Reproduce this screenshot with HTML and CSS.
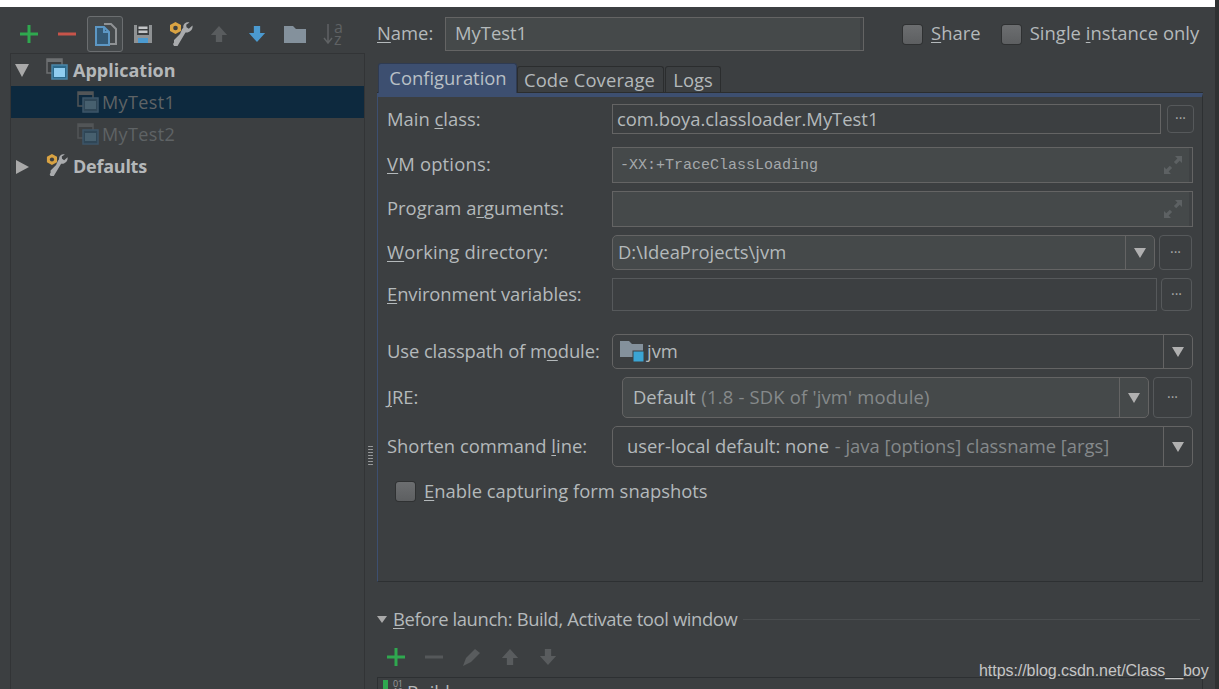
FILE: index.html
```html
<!DOCTYPE html>
<html lang="en">
<head>
<meta charset="utf-8">
<title>Run/Debug Configurations</title>
<link rel="stylesheet" href="styles.css">
</head>
<body>
<svg class="defs" width="0" height="0" aria-hidden="true">
  <defs>
    <symbol id="i-plus" viewBox="0 0 20 20"><path d="M10 1v18M1 10h18" stroke="#2fa84f" stroke-width="3" fill="none"/></symbol>
    <symbol id="i-up" viewBox="0 0 20 20"><path d="M10 1L19 11H13.500V19H6.500V11H1Z" fill="currentColor"/></symbol>
    <symbol id="i-down" viewBox="0 0 20 20"><path d="M10 19L19 9H13.500V1H6.500V9H1Z" fill="currentColor"/></symbol>
    <symbol id="i-wrench" viewBox="0 0 24 24">
      <path d="M6.500 0l5.500 3v6l-5.500 3L1 9V3Z" fill="#d9a343"/><circle cx="6.500" cy="6" r="2.300" fill="#3c3f41"/>
      <path d="M23.500 3.500l-3.700 3.200-2.300-1.500-.3-2.500L20.500.5c-3.300-1-6.700 1.400-6.200 5.200l-1.300 1.600L11 12 5 18v2.500l-1 1.500 1 2h3.500L16.500 10.500c3.500.8 7.800-2.700 7-7Z" fill="#a9abad"/>
    </symbol>
    <symbol id="i-app" viewBox="0 0 22 22">
      <rect x="1" y="1" width="15" height="14" fill="#3c3f41" stroke="#6d7072" stroke-width="1.500"/><rect x="1" y="1" width="15" height="3" fill="#6d7072"/>
      <rect x="6" y="7" width="15" height="14" fill="#2c6a8c" stroke="#4a86a8" stroke-width="1.500"/><rect x="8" y="10" width="11" height="9" fill="#90cdf0"/>
    </symbol>
    <symbol id="i-app-dim" viewBox="0 0 22 22">
      <rect x="1" y="1" width="15" height="14" fill="none" stroke="#525557" stroke-width="1.500"/><rect x="1" y="1" width="15" height="3" fill="#525557"/>
      <rect x="6" y="7" width="15" height="14" fill="#2f4656" stroke="#3c5568" stroke-width="1.500"/><rect x="8" y="10" width="11" height="8" fill="#47606f"/>
    </symbol>
    <symbol id="i-expand" viewBox="0 0 20 20"><path d="M12 1h7v7l-2.300-2.300-3.500 3.500-2.300-2.300 3.500-3.500ZM8 19H1v-7l2.300 2.300 3.500-3.500 2.300 2.300-3.500 3.500Z" fill="#5d6163"/></symbol>
  </defs>
</svg>
<div class="window">
  <div class="frame">
    <div class="topbar"></div>
    <div class="main">
      <aside class="side">
        <div class="toolbar">
          <span class="tool"><svg class="ico20" viewBox="0 0 20 20"><use href="#i-plus"/></svg></span>
          <span class="tool"><svg class="ico20" viewBox="0 0 20 20"><path d="M1 10h18" stroke="#c7544a" stroke-width="3"/></svg></span>
          <span class="tool tool-active"><svg class="ico24" viewBox="0 0 24 24"><path d="M11 2h7l5 5v15h-6" fill="none" stroke="#8f9294" stroke-width="2"/><path d="M3 5h8l5 5v13H3Z" fill="#345a76" stroke="#5c97c4" stroke-width="2"/><path d="M11 5v5h5" fill="none" stroke="#5c97c4" stroke-width="2"/></svg></span>
          <span class="tool"><svg class="ico20" viewBox="0 0 20 20"><path d="M1 1h18v18H1Z" fill="#8f9294"/><rect x="4" y="1" width="12" height="10" fill="#3c3f41"/><rect x="5.500" y="2.500" width="9" height="2.500" fill="#c4c6c8"/><rect x="5.500" y="6.500" width="9" height="2.500" fill="#c4c6c8"/><rect x="5" y="14" width="10" height="5" fill="#4b9ad0"/></svg></span>
          <span class="tool"><svg class="ico24" viewBox="0 0 24 24"><use href="#i-wrench"/></svg></span>
          <span class="tool t-dim"><svg class="ico18" viewBox="0 0 20 20"><use href="#i-up"/></svg></span>
          <span class="tool t-blue"><svg class="ico18" viewBox="0 0 20 20"><use href="#i-down"/></svg></span>
          <span class="tool"><svg class="ico22" viewBox="0 0 22 22"><path d="M0 3h9l3 3h10v14H0Z" fill="#84919c"/></svg></span>
          <span class="tool"><span class="sort"><svg class="sort-arrow" viewBox="0 0 10 20"><path d="M5 0v19M1 14l4 5 4-5" fill="none" stroke="#5f6264" stroke-width="1.500"/></svg><span class="sort-letters"><span class="sort-letter">a</span><span class="sort-letter">z</span></span></span></span>
        </div>
        <div class="tree">
          <div class="tree-row">
            <span class="twist twist-open"></span>
            <svg class="tree-ico ico-top" viewBox="0 0 22 22"><use href="#i-app"/></svg>
            <span class="tree-bold">Application</span>
          </div>
          <div class="tree-row tree-child tree-selected">
            <svg class="tree-ico" viewBox="0 0 22 22"><use href="#i-app-dim"/></svg>
            <span class="tree-dim">MyTest1</span>
          </div>
          <div class="tree-row tree-child">
            <svg class="tree-ico" viewBox="0 0 22 22"><use href="#i-app-dim"/></svg>
            <span class="tree-dim">MyTest2</span>
          </div>
          <div class="tree-row">
            <span class="twist twist-closed"></span>
            <svg class="tree-ico ico-top" viewBox="0 0 24 24"><use href="#i-wrench"/></svg>
            <span class="tree-bold tree-def">Defaults</span>
          </div>
        </div>
      </aside>
      <section class="content">
        <div class="grip"></div>
        <div class="name-row">
          <label class="name-label"><u>N</u>ame:</label>
          <div class="field name-field">MyTest1</div>
          <span class="check share-check"></span><span class="check-text"><u>S</u>hare</span>
          <span class="check single-check"></span><span class="check-text">Single <u>i</u>nstance only</span>
        </div>
        <div class="tabs">
          <span class="tab tab-on">Configuration</span>
          <span class="tab tab-code">Code Coverage</span>
          <span class="tab tab-logs">Logs</span>
        </div>
        <div class="panel">
          <div class="row r-main">
            <span class="label">Main <u>c</u>lass:</span>
            <div class="field plain f-main">com.boya.classloader.MyTest1</div>
            <span class="dots d-main">...</span>
          </div>
          <div class="row r-vm">
            <span class="label"><u>V</u>M options:</span>
            <div class="field filled f-wide strip mono">-XX:+TraceClassLoading<svg class="expand" viewBox="0 0 20 20"><use href="#i-expand"/></svg></div>
          </div>
          <div class="row r-prog">
            <span class="label">Program a<u>r</u>guments:</span>
            <div class="field filled f-wide strip"><svg class="expand" viewBox="0 0 20 20"><use href="#i-expand"/></svg></div>
          </div>
          <div class="row r-work">
            <span class="label label-work"><u>W</u>orking directory:</span>
            <div class="combo filled f-work"><span class="combo-text"><span>D:\<span class="bar-i">I</span>deaProjects\jvm</span></span><span class="caret"></span></div>
            <span class="dots d-work">...</span>
          </div>
          <div class="row r-env">
            <span class="label label-env"><u>E</u>nvironment variables:</span>
            <div class="field plain f-env"></div>
            <span class="dots d-env">...</span>
          </div>
          <div class="row r-cp">
            <span class="label label-cp">Use classpath of m<u>o</u>dule:</span>
            <div class="combo f-wide"><span class="combo-text cp-text"><svg class="mod" viewBox="0 0 24 24"><path d="M0 2h9l3 3h11v13H0Z" fill="#84919c"/><rect x="13" y="12" width="11" height="11" fill="#3ba5d4" stroke="#3c3f41"/></svg>jvm</span><span class="caret"></span></div>
          </div>
          <div class="row r-jre">
            <span class="label"><u>J</u>RE:</span>
            <div class="combo filled f-jre"><span class="combo-text"><span>Default <span class="muted muted-jre">(1.8 - SDK of 'jvm' module)</span></span></span><span class="caret"></span></div>
            <span class="dots d-jre">...</span>
          </div>
          <div class="row r-short">
            <span class="label">Shorten command <u>l</u>ine:</span>
            <div class="combo f-wide"><span class="combo-text short-text"><span>user-local default: none <span class="muted muted-short">- java [options] classname [args]</span></span></span><span class="caret"></span></div>
          </div>
          <div class="snap">
            <span class="check"></span><span class="check-text"><u>E</u>nable capturing form snapshots</span>
          </div>
        </div>
        <div class="before">
          <span class="before-arrow"></span>
          <span class="before-text"><u>B</u>efore launch: Build, Activate tool window</span>
          <span class="before-line"></span>
        </div>
        <div class="before-tools">
          <span class="btool"><svg class="ico20" viewBox="0 0 20 20"><use href="#i-plus"/></svg></span>
          <span class="btool"><svg class="ico20" viewBox="0 0 20 20"><path d="M1 10h18" stroke="#55585a" stroke-width="3"/></svg></span>
          <span class="btool"><svg class="ico20" viewBox="0 0 20 20"><path d="M1 19l3-8L13 2l5 4-9 9Z" fill="#595c5e"/></svg></span>
          <span class="btool t-dim"><svg class="ico18" viewBox="0 0 20 20"><use href="#i-up"/></svg></span>
          <span class="btool t-dim"><svg class="ico18" viewBox="0 0 20 20"><use href="#i-down"/></svg></span>
        </div>
        <div class="build-list">
          <span class="build-bars"></span><span class="build-nums">01<br>10</span><span class="build-text">Build</span>
        </div>
      </section>
    </div>
  </div>
  <div class="edge"></div>
  <div class="watermark">https://blog.csdn.net/Class__boy</div>
</div>
</body>
</html>
```
FILE: styles.css
```css
* { box-sizing: border-box; }
html, body { margin: 0; height: 689px; overflow: hidden; background: #3c3f41; }
body { font-family: "Open Sans", "Noto Sans", "Liberation Sans", sans-serif; font-size: 18.4px; color: #b4b9bb; }
u { text-underline-offset: 2px; text-decoration-thickness: 1px; }
.defs { position: absolute; }

.window { display: flex; height: 689px; position: relative; overflow: hidden; }
.frame { width: 1215px; display: flex; flex-direction: column; }
.edge { width: 4px; background: #2f3132; }
.topbar { height: 7px; background: #fff; flex: none; }
.main { display: flex; flex: 1; min-height: 0; }

.side { width: 365px; flex: none; display: flex; flex-direction: column; }
.toolbar { height: 46px; padding: 9px 0 0 10px; display: flex; flex: none; }
.tool { width: 38px; height: 36px; display: flex; align-items: center; justify-content: center; }
.tool-active { width: 36px; margin: 0 1px; border: 1px solid #6b6e70; border-radius: 3px; background: #45494b; }
.t-dim { color: #595c5e; }
.t-blue { color: #4b9ad0; }
.ico18 { width: 18px; height: 18px; }
.ico20 { width: 20px; height: 20px; }
.ico22 { width: 22px; height: 22px; }
.ico24 { width: 24px; height: 24px; }
.sort { display: flex; align-items: center; gap: 1px; }
.sort-arrow { width: 10px; height: 20px; }
.sort-letters { display: flex; flex-direction: column; padding-bottom: 2px; }
.sort-letter { font-size: 16px; height: 12px; line-height: 12px; color: #5f6264; }

.tree { flex: 1; margin-left: 10px; border: 1px solid #323436; border-bottom: 0; }
.tree-row { height: 32px; display: flex; align-items: center; position: relative; padding-left: 35px; }
.tree-child { padding-left: 66px; }
.tree-selected { background: #0d293e; }
.tree-ico { width: 22px; height: 22px; flex: none; margin-right: 5px; }
.tree-child .tree-ico { margin-right: 3px; }
.ico-top { margin-top: -2px; }
.tree-bold { font-weight: 700; font-size: 18px; color: #b4b7b9; }
.tree-def { letter-spacing: -0.25px; }
.tree-dim { color: #5f6365; font-size: 18px; letter-spacing: 0.4px; }
.twist { position: absolute; left: 4px; top: 10px; width: 0; height: 0; }
.twist-open { border-left: 7px solid transparent; border-right: 7px solid transparent; border-top: 13px solid #a9a9a9; }
.twist-closed { left: 5px; border-top: 7px solid transparent; border-bottom: 7px solid transparent; border-left: 13px solid #a9a9a9; }

.content { flex: 1; padding-left: 12px; position: relative; min-width: 0; }
.grip { position: absolute; left: 3px; top: 438px; width: 5px; height: 21px; background-image: radial-gradient(circle, #a0a2a4 0.8px, transparent 1px); background-size: 2.500px 3px; }
.name-row { display: flex; align-items: center; height: 34px; margin-top: 10px; }
.name-label { width: 68px; padding-bottom: 4px; }
.field { border: 1px solid #646464; display: flex; align-items: center; position: relative; }
.name-field { width: 419px; height: 34px; padding: 0 0 4px 9px; background: #45494a; margin-right: 39px; box-shadow: inset -3px 0 0 #3f4244; }
.strip { box-shadow: inset -3px 0 0 #3f4244; }
.check { width: 19px; height: 19px; flex: none; border-radius: 3px; background: linear-gradient(#6c6e70, #5d5f61); box-shadow: 0 0 0 1px #2f3132; margin-right: 9px; }
.single-check { margin-left: 21px; }
.check-text { white-space: nowrap; }
.name-row .check-text { padding-bottom: 4px; letter-spacing: 0.05px; }
.snap .check-text { padding-bottom: 2px; }

.tabs { display: flex; align-items: flex-end; height: 30px; margin-top: 12px; padding-left: 1px; }
.tab { height: 27px; border: 1px solid #2b2d2e; border-bottom: 0; border-radius: 3px 3px 0 0; display: flex; align-items: center; justify-content: center; padding-bottom: 2px; }
.tab-on { height: 30px; width: 139px; background: #3d4f70; color: #b9c0c6; border-color: #2f3b52; padding: 0 0 3px 1px; position: relative; z-index: 1; }
.tab-code { width: 147px; padding-right: 2px; letter-spacing: 0.15px; }
.tab-logs { width: 56px; margin-left: 1px; }

.panel { width: 826px; height: 489px; border: 1px solid #2d3032; border-left-color: #3d4f70; border-top: 4px solid #3d4f70; box-shadow: 0 -1px 0 #2b2d2e; padding: 7px 0 0 9px; }
.row { display: flex; align-items: center; }
.label { width: 225px; flex: none; white-space: nowrap; padding-bottom: 2px; }
.label-work { letter-spacing: 0.2px; }
.label-env { letter-spacing: -0.1px; }
.label-cp { letter-spacing: -0.1px; }
.r-vm .label, .r-prog .label { padding-bottom: 4px; }
.r-vm .label { letter-spacing: 0.2px; }
.plain { height: 100%; padding-left: 4px; }
.f-main { padding-bottom: 2px; }
.filled { background: #45494a; }
.mono { font-family: "Liberation Mono", monospace; font-size: 15px; padding-left: 7px; color: #a4a8aa; }
.f-wide { width: 581px; height: 100%; }
.expand { position: absolute; right: 9px; top: 7px; width: 20px; height: 20px; }
.dots { border: 1px solid #56595b; border-radius: 4px; display: flex; align-items: center; justify-content: center; height: 100%; margin-left: 4px; padding-bottom: 10px; font-size: 14px; color: #a8a8a8; line-height: 1; }
.r-main { height: 30px; }
.f-main { width: 549px; }
.d-main { width: 27px; margin-left: 6px; height: 28px; }
.r-vm { height: 36px; margin-top: 13px; }
.r-vm .field, .r-prog .field { height: 36px; }
.r-prog { height: 36px; margin-top: 8px; }
.r-work { height: 35px; margin-top: 8px; }
.f-work { width: 543px; height: 100%; }
.d-work { width: 33px; }
.r-env { height: 33px; margin-top: 8px; }
.f-env { width: 545px; border-color: #56595b; }
.d-env { width: 31px; }
.combo { border: 1px solid #646464; border-radius: 5px; display: flex; align-items: center; }
.combo-text { flex: 1; padding: 0 0 2px 5px; white-space: nowrap; display: flex; align-items: center; }
.caret { width: 29px; height: 100%; border-left: 1px solid #646464; flex: none; position: relative; }
.caret::after { content: ""; position: absolute; left: 8px; top: 50%; margin-top: -5px; border-left: 6px solid transparent; border-right: 6px solid transparent; border-top: 10px solid #b0b0b0; }
.r-cp { height: 35px; margin-top: 23px; }
.cp-text { padding-left: 7px; gap: 3px; }
.mod { width: 24px; height: 24px; }
.r-jre { height: 41px; margin-top: 8px; }
.f-jre { width: 527px; height: 100%; margin-left: 10px; }
.f-jre .combo-text { padding-left: 10px; }
.d-jre { width: 39px; }
.r-short { height: 41px; margin-top: 8px; }
.short-text { padding-left: 14px; }
.muted { color: #85898b; }
.muted-jre { letter-spacing: 0.2px; margin-left: 1px; }
.muted-short { margin-left: 1px; }
.bar-i { font-family: "Liberation Sans", sans-serif; }
.snap { display: flex; align-items: center; margin: 13px 0 0 9px; height: 22px; }

.before { display: flex; align-items: center; margin-top: 26px; height: 22px; }
.before-arrow { width: 0; height: 0; border-left: 5px solid transparent; border-right: 5px solid transparent; border-top: 7px solid #a9a9a9; margin-right: 6px; }
.before-text { white-space: nowrap; width: 344px; flex: none; letter-spacing: -0.37px; padding-bottom: 2px; }
.before-line { flex: none; width: 457px; height: 1px; background: #4a4d4f; margin-left: 6px; }
.before-tools { display: flex; height: 36px; margin-top: 9px; }
.btool { width: 38px; height: 36px; display: flex; align-items: center; justify-content: center; }
.build-list { position: relative; width: 826px; height: 30px; border: 1px solid #2d3032; margin-top: 2px; padding-left: 5px; display: flex; gap: 5px; align-items: flex-start; font-size: 18px; overflow: hidden; }
.build-bars { width: 5px; height: 14px; margin-top: 2px; background: #2fa84f; }
.build-nums { font-size: 9px; line-height: 8px; margin-top: 2px; width: 9px; letter-spacing: -0.5px; color: #9a9c9e; }
.build-text { line-height: 22px; margin-top: 3px; }

.watermark { position: absolute; left: 979px; top: 662px; font-family: "Liberation Sans", sans-serif; font-size: 16px; letter-spacing: -0.05px; color: #c6c6c6; white-space: nowrap; }
```
